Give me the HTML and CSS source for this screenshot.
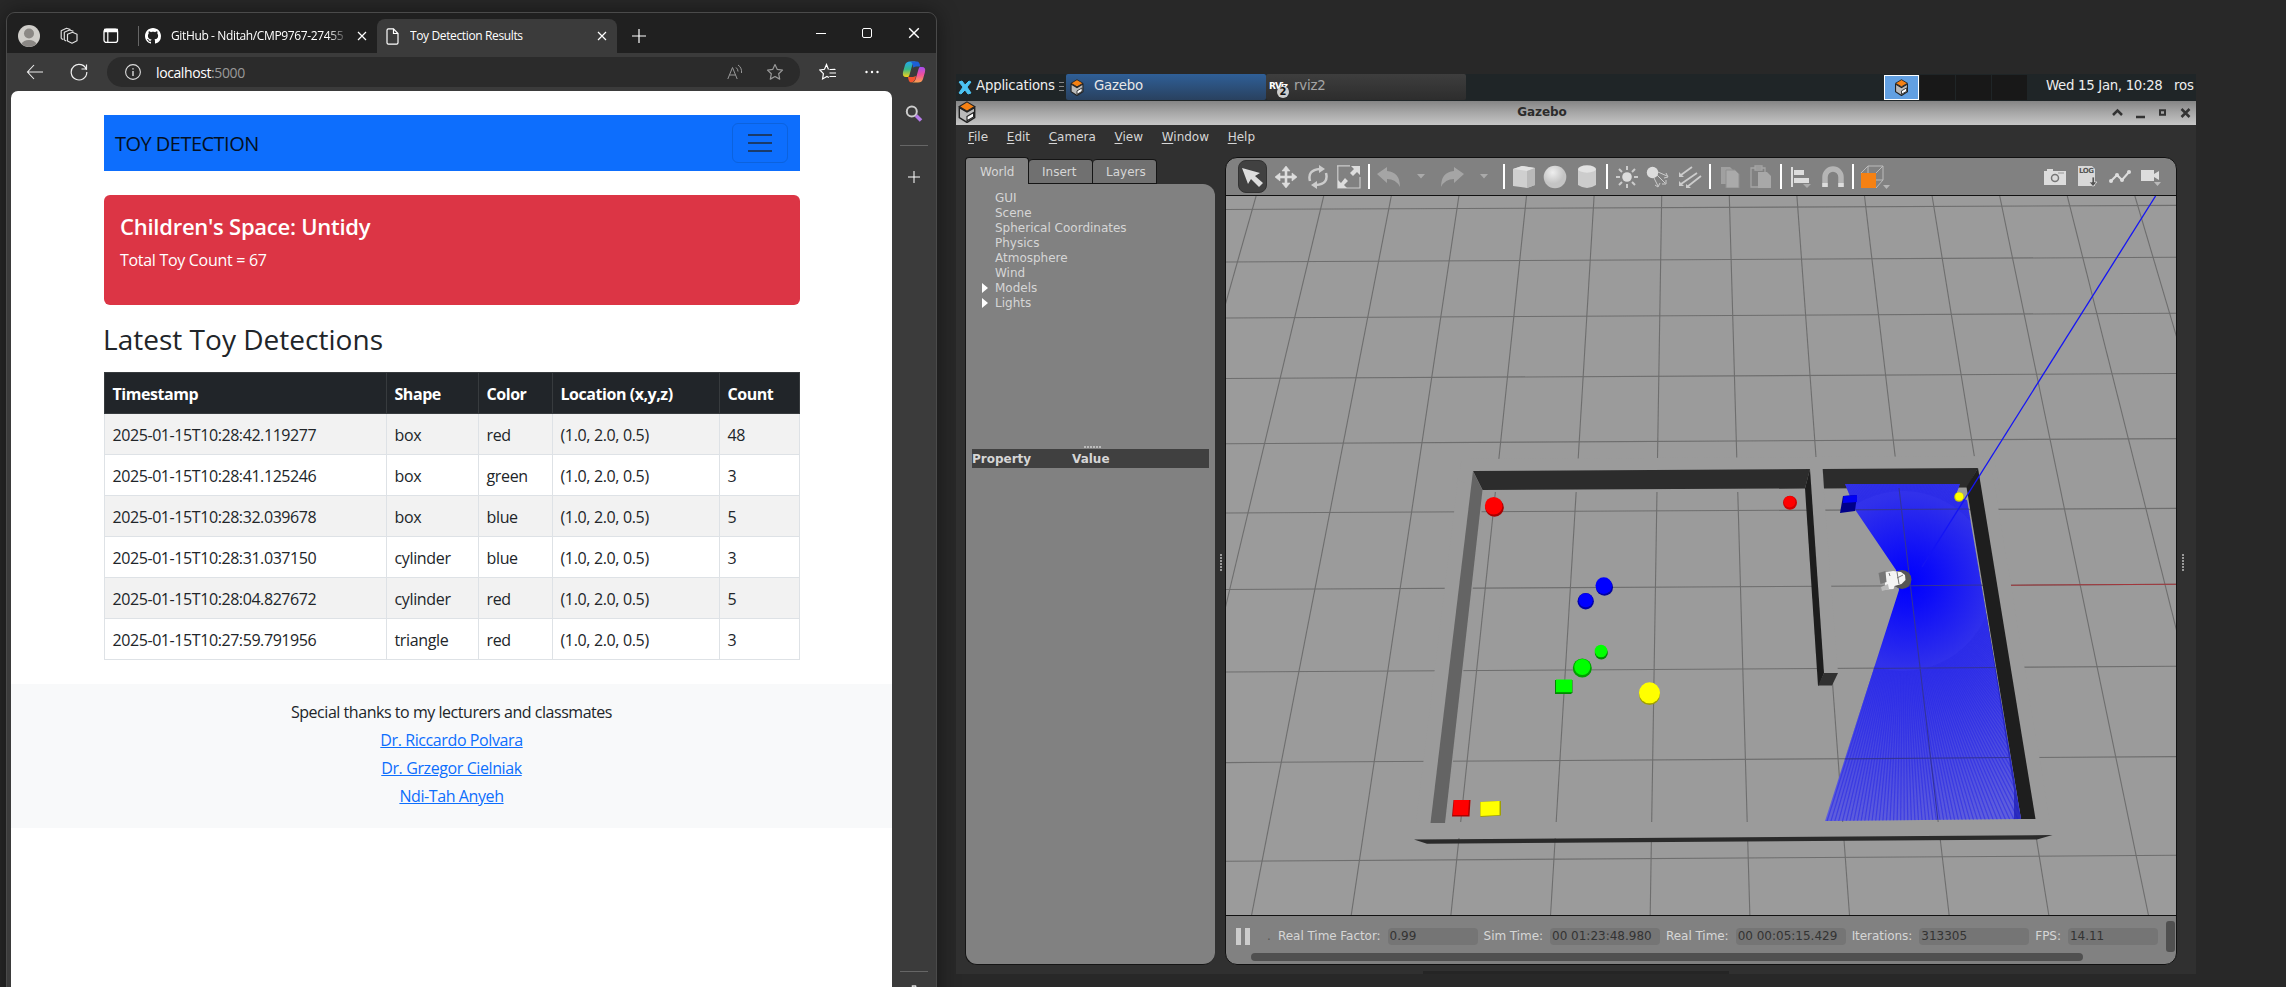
FILE: index.html
```html
<!DOCTYPE html>
<html lang="en">
<head>
<meta charset="utf-8">
<title>Toy Detection Results</title>
<link rel="stylesheet" href="styles.css">
</head>
<body>
<svg class="defs" width="0" height="0">
  <symbol id="gz" viewBox="0 0 16 20"><path d="M1 6v9l7 4.500 7-4.500V6L8 10z" fill="#bbb" stroke="#222" stroke-width="1.300"/><path d="M8 .8l7 4.200-7 4.200-7-4.200z" fill="#f58113" stroke="#222"/><path d="M8 14l6-3.500v4L8 18z" fill="#fff" stroke="#222"/></symbol>
  <symbol id="x" viewBox="0 0 10 10"><path d="M1 1l8 8M9 1l-8 8" stroke="currentColor" stroke-width="1.200"/></symbol>
  <symbol id="plus" viewBox="0 0 14 14"><path d="M7 0v14M0 7h14" stroke="currentColor" stroke-width="1.200"/></symbol>
  <symbol id="down" viewBox="0 0 8 5"><path d="M0 0h8L4 4.500z" fill="currentColor"/></symbol>
  <symbol id="star" viewBox="0 0 18 18"><path d="M9 1.500l2.300 4.900 5.200.7-3.800 3.700 1 5.300L9 13.500l-4.700 2.600 1-5.300L1.500 7.100l5.200-.7z" fill="none" stroke="currentColor" stroke-width="1.200" stroke-linejoin="round"/></symbol>
</svg>

<main class="desktop">
<section class="browser">
  <header class="tabstrip">
    <svg class="avatar" viewBox="0 0 22 22"><circle cx="11" cy="11" r="11" fill="#cfcdc9"/><circle cx="11" cy="8.500" r="5" fill="#8b8885"/><path d="M3.500 19a8 6 0 0 1 15 0A11 11 0 0 1 3.500 19z" fill="#8b8885"/></svg>
    <svg class="spaces" viewBox="0 0 18 18"><g fill="none" stroke="#ddd" stroke-width="1.200" stroke-linejoin="round"><path d="M7.500 7.200l5-2 4.500 2v6.500l-5 2.500-4.500-2.200z"/><path d="M4.300 13V5.300L9.500 3l4 1.300M1.200 11.500V3.800L6.500 1.300l4 1.200M1.200 11.500l2 1M4.300 13l2 1"/></g></svg>
    <svg class="tabact" viewBox="0 0 16 16"><path d="M1 2.500h14" stroke="#fff" stroke-width="3.500"/><rect x="1" y="1.200" width="13.600" height="13.200" rx="2.500" fill="none" stroke="#fff" stroke-width="1.300"/><path d="M4.800 3v11" stroke="#fff" stroke-width="1.200"/></svg>
    <div class="tab">
      <svg width="16" height="16" viewBox="0 0 16 16"><path fill="#fff" d="M8 0C3.580 0 0 3.580 0 8c0 3.540 2.290 6.530 5.470 7.590.4.070.55-.17.55-.38 0-.19-.01-.82-.01-1.490-2.010.37-2.530-.49-2.690-.94-.09-.23-.48-.94-.82-1.130-.28-.15-.68-.52-.01-.53.63-.01 1.080.58 1.230.82.72 1.210 1.870.87 2.330.66.07-.52.28-.87.51-1.070-1.780-.2-3.640-.89-3.640-3.950 0-.87.31-1.590.82-2.150-.08-.2-.36-1.020.08-2.120 0 0 .67-.21 2.200.82.64-.18 1.320-.27 2-.27s1.360.09 2 .27c1.530-1.040 2.200-.82 2.200-.82.44 1.100.16 1.920.08 2.120.51.56.82 1.270.82 2.150 0 3.070-1.870 3.750-3.650 3.950.29.25.54.73.54 1.480 0 1.070-.01 1.930-.01 2.200 0 .21.15.46.55.38A8 8 0 0 0 16 8c0-4.420-3.580-8-8-8z"/></svg>
      <span class="tabtext fade">GitHub - Nditah/CMP9767-27455</span>
      <svg class="tabx" width="10" height="10"><use href="#x"/></svg>
    </div>
    <div class="tab active">
      <svg width="13" height="17" viewBox="0 0 13 17"><path d="M1 2.200Q1 .8 2.400.8H7.500L12 5.500v9.300q0 1.400-1.400 1.400H2.400Q1 16.200 1 14.800zM7.500.8v4.700H12" fill="none" stroke="#fff" stroke-width="1.200"/></svg>
      <span class="tabtext">Toy Detection Results</span>
      <svg class="tabx" width="10" height="10"><use href="#x"/></svg>
    </div>
    <svg class="newtab" width="14" height="14"><use href="#plus"/></svg>
    <div class="winbtns">
      <svg width="10" height="10" viewBox="0 0 10 10"><path d="M0 5.500h10" stroke="#fff"/></svg>
      <svg width="10" height="10" viewBox="0 0 10 10"><rect x=".5" y=".5" width="9" height="9" rx="1.500" fill="none" stroke="#fff"/></svg>
      <svg width="12" height="12"><use href="#x"/></svg>
    </div>
  </header>

  <nav class="urlrow">
    <svg width="18" height="16" viewBox="0 0 18 16"><path d="M17 8H1.500M8 1L1.500 8 8 15" fill="none" stroke="#eee" stroke-width="1.100"/></svg>
    <svg class="reload" width="18" height="18" viewBox="0 0 18 18"><path d="M16.500 7A7.800 7.800 0 1 0 16.800 9M16.500 1.500V6h-5" fill="none" stroke="#eee" stroke-width="1.200"/></svg>
    <div class="address">
      <svg width="16" height="16" viewBox="0 0 16 16"><circle cx="8" cy="8" r="7.400" fill="none" stroke="#ddd" stroke-width="1.100"/><path d="M8 7v5M8 4.300v1.300" stroke="#ddd" stroke-width="1.400"/></svg>
      <span class="url">localhost<i>:5000</i></span>
      <svg class="read" width="16" height="16" viewBox="0 0 16 16"><g fill="none" stroke="#999"><path d="M.8 15L5.500 3.500 10.200 15M2.500 11h6"/><path d="M9 3.500q2 1.500 2 4M11 1q4 2.500 3.500 8"/></g></svg>
      <svg class="fav" width="18" height="18"><use href="#star"/></svg>
    </div>
    <svg class="favs" width="18" height="18" viewBox="0 0 18 18"><path d="M12 6.500l4-.1M9.500 6.500L7.500 1.500 5.500 6.300.9 7l3.500 3.700-.8 5.200 4.300-2.500 2 1.200M10.500 6.500h6M10.500 10H17M10.500 13.500H17" fill="none" stroke="#fff" stroke-width="1.200"/></svg>
    <svg class="dots" width="14" height="4" viewBox="0 0 14 4"><g fill="#fff"><circle cx="1.500" cy="2" r="1.200"/><circle cx="7" cy="2" r="1.200"/><circle cx="12.500" cy="2" r="1.200"/></g></svg>
    <svg class="copilot" width="24" height="22" viewBox="0 0 24 22"><defs><linearGradient id="ca" x2="0" y2="1"><stop stop-color="#22a7f0"/><stop offset=".5" stop-color="#37b788"/><stop offset="1" stop-color="#f7d117"/></linearGradient><linearGradient id="cb" x2="0" y2="1"><stop stop-color="#a64df0"/><stop offset=".5" stop-color="#f0509a"/><stop offset="1" stop-color="#fba24c"/></linearGradient></defs><path d="M6 16H4Q0 16 1 11L3 4Q4 .5 8 .5h6Q11 1 10 5L8 12q-1 4-2 4z" fill="url(#ca)"/><path d="M8 .5h7q2.500 0 3.300 5H14l-3 1q0-5-3-6z" fill="#1d5fd8"/><path d="M18 6h2q4 0 3 5l-2 7q-1 3.500-5 3.500h-6q3-.5 4-4.500l2-7q1-4 2-4z" fill="url(#cb)"/><path d="M6 16h5l3-1q-1 6-5 6.500Q6.500 21 6 16z" fill="#f4542e"/></svg>
  </nav>

  <div class="content">
    <article class="page">
      <div class="container">
        <div class="navbar"><span class="brand">TOY DETECTION</span><span class="toggler"><b></b><b></b><b></b></span></div>
        <div class="alert"><h4>Children's Space: Untidy</h4><p>Total Toy Count = 67</p></div>
        <h3>Latest Toy Detections</h3>
        <table>
          <colgroup><col class="c1"><col class="c2"><col class="c3"><col class="c4"><col></colgroup>
          <thead><tr><th>Timestamp</th><th>Shape</th><th>Color</th><th>Location (x,y,z)</th><th>Count</th></tr></thead>
          <tbody>
            <tr><td class="ts">2025-01-15T10:28:42.119277</td><td>box</td><td>red</td><td>(1.0, 2.0, 0.5)</td><td>48</td></tr>
            <tr><td class="ts">2025-01-15T10:28:41.125246</td><td>box</td><td>green</td><td>(1.0, 2.0, 0.5)</td><td>3</td></tr>
            <tr><td class="ts">2025-01-15T10:28:32.039678</td><td>box</td><td>blue</td><td>(1.0, 2.0, 0.5)</td><td>5</td></tr>
            <tr><td class="ts">2025-01-15T10:28:31.037150</td><td>cylinder</td><td>blue</td><td>(1.0, 2.0, 0.5)</td><td>3</td></tr>
            <tr><td class="ts">2025-01-15T10:28:04.827672</td><td>cylinder</td><td>red</td><td>(1.0, 2.0, 0.5)</td><td>5</td></tr>
            <tr><td class="ts">2025-01-15T10:27:59.791956</td><td>triangle</td><td>red</td><td>(1.0, 2.0, 0.5)</td><td>3</td></tr>
          </tbody>
        </table>
      </div>
      <footer><p>Special thanks to my lecturers and classmates</p><a>Dr. Riccardo Polvara</a><a>Dr. Grzegor Cielniak</a><a>Ndi-Tah Anyeh</a></footer>
    </article>
    <aside class="side">
      <svg width="18" height="18" viewBox="0 0 18 18"><circle cx="6.800" cy="6.500" r="5" fill="none" stroke="#ccc" stroke-width="2"/><path d="M11 10.500l5 5" stroke="#b57be8" stroke-width="3.500"/></svg>
      <hr>
      <svg class="sideplus" width="12" height="12"><use href="#plus"/></svg>
      <hr class="low">
      <svg class="gear" width="16" height="16" viewBox="0 0 16 16"><path d="M6.500 1h3l.5 2 2 1 2-.5 1.200 2.500-1.500 2 1.500 2-1.200 2.500-2-.5-2 1-.5 2h-3z" fill="none" stroke="#ddd" stroke-width="1.500"/></svg>
    </aside>
  </div>
</section>

<section class="remote">
  <div class="panel">
    <svg class="xfce" width="14" height="15" viewBox="0 0 14 15"><path d="M1 2l3-1 3 4 4-4 2 1-4 5 4 6-3 1-3-4-4 4-2-1 4-6z" fill="#4cc3f2" stroke="#4cc3f2"/></svg>
    <span class="apps">Applications</span>
    <svg class="bars" width="5" height="10" viewBox="0 0 5 10"><path d="M0 .5h5M0 4.500h5M0 8.500h5" stroke="#888"/></svg>
    <div class="task on"><svg width="14" height="17"><use href="#gz"/></svg><span>Gazebo</span></div>
    <div class="task"><div class="rviz"><em>RViz</em><b>2</b></div><span>rviz2</span></div>
    <div class="pager"><span class="cur"><svg width="15" height="17"><use href="#gz"/></svg></span><span></span><span></span><span></span></div>
    <span class="clock">Wed 15 Jan, 10:28</span><span class="user">ros</span>
  </div>
  <div class="titlebar">
    <svg width="18" height="22"><use href="#gz"/></svg><span class="title">Gazebo</span>
    <svg class="wm" width="79" height="12" viewBox="0 0 79 12"><g fill="none" stroke="#333" stroke-width="2.500"><path d="M1 8l4.500-4.500L10 8M24 10h9"/><path d="M48 3.300h5v4.500h-5z" stroke-width="2"/><path d="M69.500 2l8 8m0-8l-8 8"/></g></svg>
  </div>
  <div class="gmenu"><span><u>F</u>ile</span><span><u>E</u>dit</span><span><u>C</u>amera</span><span><u>V</u>iew</span><span><u>W</u>indow</span><span><u>H</u>elp</span></div>
  <div class="gbody">
    <div class="left">
      <div class="gtabs"><span class="sel">World</span><span>Insert</span><span>Layers</span></div>
      <div class="tree">
        <ul><li>GUI</li><li>Scene</li><li>Spherical Coordinates</li><li>Physics</li><li>Atmosphere</li><li>Wind</li><li class="open">Models</li><li class="open">Lights</li></ul>
        <i class="hgrip"></i>
        <div class="prop"><span>Property</span><span>Value</span></div>
      </div>
    </div>
    <i class="vgrip"></i>
    <div class="right">
      <div class="tools">
        <span class="selbtn"><svg width="22" height="22" viewBox="0 0 22 22"><path d="M0 2l18 5-5 3 8 7-4 4-8-8-3 5z" fill="#ddd"/></svg></span>
        <span class="t"><svg width="22" height="22" viewBox="0 0 22 22"><path d="M11 0l4 5h-3v5h5V7l5 4-5 4v-3h-5v5h3l-4 5-4-5h3v-5H5v3l-5-4 5-4v3h5V5H7z" fill="#ddd" stroke="#ddd" stroke-width=".6"/></svg></span>
        <span class="t"><svg width="20" height="24" viewBox="0 0 20 24"><path d="M2 16Q-1 5 12 4M18 8q3 11-10 12" fill="none" stroke="#ccc" stroke-width="2.500"/><path d="M11 0l6 4-6 4zM9 16l-6 4 6 4z" fill="#ccc"/></svg></span>
        <span class="t"><svg width="24" height="24" viewBox="0 0 24 24"><path d="M13 .8H.8V23H23V12M0 .8h6" fill="none" stroke="#ccc" stroke-width="1.200"/><path d="M14 1h9v9l-3-3-4 4-3-3 4-4zM1 15l3 3 4-5 3 3-4 4 3 3H1z" fill="#ddd"/></svg></span>
        <i class="sep"></i>
        <span class="t"><svg width="24" height="22" viewBox="0 0 24 22"><path d="M0 8l10-7v4q13 1 13 16-4-8-13-8v4z" fill="#a5a5a5"/></svg></span>
        <span class="t dd"><svg width="8" height="5"><use href="#down"/></svg></span>
        <span class="t"><svg width="24" height="22" viewBox="0 0 24 22"><path d="M24 8L14 1v4Q1 6 1 21q4-8 13-8v4z" fill="#a5a5a5"/></svg></span>
        <span class="t dd"><svg width="8" height="5"><use href="#down"/></svg></span>
        <i class="sep"></i>
        <span class="t"><svg width="24" height="24" viewBox="0 0 24 24"><path d="M1 4l9-3 13 2v17l-8 3-14-2z" fill="#cfcfcf"/><path d="M1 4l9-3 13 2-8 3z" fill="#e2e2e2"/><path d="M15 6l8-3v17l-8 3z" fill="#b9b9b9"/></svg></span>
        <span class="t"><svg width="24" height="24" viewBox="0 0 24 24"><defs><radialGradient id="sp" cx=".4" cy=".3"><stop stop-color="#eee"/><stop offset="1" stop-color="#c4c4c4"/></radialGradient></defs><circle cx="12" cy="12" r="11.300" fill="url(#sp)"/></svg></span>
        <span class="t"><svg width="20" height="24" viewBox="0 0 20 24"><path d="M1 4v16q9 6 18 0V4z" fill="#ccc"/><ellipse cx="10" cy="4" rx="9" ry="3.700" fill="#e2e2e2"/></svg></span>
        <i class="sep"></i>
        <span class="t"><svg width="22" height="22" viewBox="0 0 22 22"><circle cx="11" cy="11" r="4.800" fill="#ddd"/><path d="M11 0v4M11 18v4M0 11h4M18 11h4M3 3l3 3M16 16l3 3M3 19l3-3M16 6l3-3" stroke="#ccc" stroke-width="2"/></svg></span>
        <span class="t"><svg width="24" height="22" viewBox="0 0 24 22"><circle cx="6.500" cy="6.500" r="5.700" fill="#ddd"/><path d="M12 6l9 4M11 9l8 8M8 12l4 8M20 7l2 4-4 1M20 14v4h-4M14 17l-2 4-3-2" stroke="#ccc" fill="none"/></svg></span>
        <span class="t"><svg width="24" height="22" viewBox="0 0 24 22"><path d="M14 1L3 9M19 7L3 18M23 10L9 21" stroke="#ccc" stroke-width="1.800"/><path d="M1 6v5h5zM1 15v5h5zM8 18v4h5z" fill="#ccc"/></svg></span>
        <i class="sep"></i>
        <span class="t"><svg width="20" height="22" viewBox="0 0 20 22"><path d="M1 1h9l3 3v14H1z" fill="#a0a0a0"/><path d="M6 4h9l4 4v14H6z" fill="#aaa" stroke="#909090"/></svg></span>
        <span class="t"><svg width="22" height="24" viewBox="0 0 22 24"><path d="M1 3h14v19H1zM5 1h7v4H5z" fill="none" stroke="#a5a5a5" stroke-width="1.300"/><path d="M8 7h9l4 4v12H8z" fill="#a8a8a8"/></svg></span>
        <i class="sep"></i>
        <span class="t"><svg width="20" height="22" viewBox="0 0 20 22"><path d="M1 1v20" stroke="#ddd" stroke-width="2"/><path d="M3 4h10v5H3zM3 12h15v5H3z" fill="#ddd"/><path d="M12 18h8l-4 4z" fill="#aaa"/></svg></span>
        <span class="t"><svg width="24" height="22" viewBox="0 0 24 22"><path d="M4 21V11a8 8 0 0 1 16 0v10" fill="none" stroke="#b5b5b5" stroke-width="5.500"/><path d="M1.300 17h5.400v4H1.300zM17.300 17h5.400v4h-5.400z" fill="#ddd"/></svg></span>
        <i class="sep"></i>
        <span class="t"><svg class="cube" width="30" height="24" viewBox="0 0 30 24"><path d="M1 8L8 1h15v14l-7 8M8 1v14l-7 8M8 15h15M16 8l7-7" fill="none" stroke="#bbb"/><path d="M1 8h15v15H1z" fill="#f58113"/><path d="M23 20h7l-3.500 4z" fill="#b5b5b5"/></svg></span>
        <div class="rtools">
          <svg width="24" height="18" viewBox="0 0 24 18"><path d="M1 3h3V1h6v2h13v14H1z" fill="#ddd"/><circle cx="12" cy="10" r="3.500" fill="none" stroke="#777" stroke-width="1.500"/><path d="M15 5h6" stroke="#999"/></svg>
          <div class="log"><svg width="22" height="23" viewBox="0 0 22 23"><path d="M1 1h14l3 3v17H1z" fill="#d8d8d8"/><path d="M15 12h2.500v5H20l-4 4.500-4-4.500h3z" fill="#555" stroke="#ddd" stroke-width=".8"/></svg><b>LOG</b></div>
          <svg width="22" height="14" viewBox="0 0 22 14"><path d="M2 11l6-6 5 5 7-8" fill="none" stroke="#ddd" stroke-width="2"/><g fill="#ddd"><circle cx="2" cy="11" r="2"/><circle cx="8" cy="5" r="2"/><circle cx="13" cy="10" r="2"/><circle cx="20" cy="2" r="2"/></g></svg>
          <svg width="20" height="18" viewBox="0 0 20 18"><path d="M0 2h13v4l5-3v9l-5-3v4H0z" fill="#ddd"/><path d="M13 14h7l-3.500 4z" fill="#bbb"/></svg>
        </div>
      </div>
      <svg class="scene" width="950" height="719" viewBox="1226 196 950 719">
        <defs>
          <clipPath id="scan"><path d="M1845 484L1960 484 1955 497 1967 500 2021 819 1825 821 1899 590 1896 570 1856 511z"/></clipPath>
          <radialGradient id="glow" gradientUnits="userSpaceOnUse" cx="1908" cy="582" r="245"><stop stop-color="#00f"/><stop offset=".1" stop-color="#0c0cf9"/><stop offset=".35" stop-color="#3030eb"/><stop offset=".65" stop-color="#4444e3"/><stop offset="1" stop-color="#5e5edc"/></radialGradient>
        </defs>
        <rect x="1226" y="196" width="950" height="719" fill="#9b9b9b"/>
        <g id="grid" stroke="#6e6e6e" stroke-width="1.100"></g>
        <g fill="#9b9b9b">
          <path d="M1462 459L1994 456 2000 492 1455 492z"/>
          <path d="M1458 480L1484 490 1446 822 1416 822z"/>
          <path d="M1966 480L1992 470 2050 822 2021 822z"/>
          <path d="M1414 822H2050V838H1414z"/>
          <path d="M1806 488L1823 480 1838 673 1824 685z"/>
        </g>
        <path d="M2011 585.200L2176 584.200" stroke="#a3363b" stroke-width="1.100"/>
        <path d="M1473 471L1810 469 1805 488.500 1482.500 490z" fill="#2c2c2c"/>
        <path d="M1822.700 469L1978 468 1967 487.500 1824 488.500z" fill="#2c2c2c"/>
        <path d="M1473 471L1482.500 490 1445 823H1430.500z" fill="#646464"/>
        <path d="M1978 468L1979.500 477 2035.500 819H2021L1966.500 487z" fill="#1e1e1e"/>
        <path d="M1810 469L1824 673 1819 685.500H1818L1805 488.500z" fill="#1d1d1d"/>
        <path d="M1824 673H1838L1832 685.500H1818z" fill="#303030"/>
        <path d="M1414 839.500L2052.500 835 2037 839.500 1427 843.800z" fill="#2a2a2a"/>
        <g clip-path="url(#scan)">
          <rect x="1820" y="480" width="210" height="345" fill="url(#glow)"/>
          <g id="rays" stroke="#2a2ae6" stroke-width="1.200" opacity=".6"></g>
          <path d="M1968 500L2014 790 2014 822H2024V800z" fill="#2020b8" opacity=".8"/>
          <path d="M1899 488L1938 821M1820 510L1970 509M1890 586L1985 585M1860 668.500L2000 667.500M1830 759L2010 757.500" stroke="#333399" stroke-width="1.100"/>
        </g>
        <path d="M2155.600 196L1922 567" stroke="#1414f5" stroke-width="1.300"/>
        <circle cx="1902" cy="579.500" r="9.500" fill="#555"/><path d="M1884 572.500l9-1.500 8 1 4 3 .5 5-4 4-7 2-1 3-8 .5z" fill="#f4f4f4"/><path d="M1878.500 573l7-2 1 11-6 2z" fill="#777"/><path d="M1881 587l7-3 1 5-7 2z" fill="#bbb"/><path d="M1897 572l2 12M1903 575l-6 3M1889 573l1 3" stroke="#777"/>
        <g>
          <circle cx="1494.500" cy="507.500" r="9.300" fill="#a80000"/><circle cx="1493.700" cy="505.700" r="8.800" fill="red"/>
          <circle cx="1790" cy="502.700" r="7" fill="#d00000"/><circle cx="1789.600" cy="501.700" r="5.800" fill="red"/>
          <circle cx="1604.500" cy="587.200" r="8.500" fill="#0000a0"/><circle cx="1603.800" cy="585.600" r="8.300" fill="#00f"/>
          <circle cx="1585.700" cy="601.300" r="8.200" fill="#0000a8"/><circle cx="1585.700" cy="600.300" r="7" fill="#00f"/>
          <circle cx="1601.300" cy="653" r="6.500" fill="#008a00"/><circle cx="1601" cy="651" r="6.300" fill="#0f0"/>
          <circle cx="1582.300" cy="668" r="9.500" fill="#00a000"/><circle cx="1582.300" cy="667" r="8" fill="#0f0"/>
          <path d="M1555 680h17.500v13h-1v1H1555z" fill="#008a00"/><path d="M1556 679.500h16v12.700h-16z" fill="#0f0"/>
          <circle cx="1649.500" cy="694.500" r="10.500" fill="#a0a000"/><circle cx="1649.500" cy="692.800" r="10.500" fill="#ff0"/>
          <path d="M1453.500 800H1470.500L1469.500 816.500H1452z" fill="#b00000"/><path d="M1454 800H1469L1468 815H1453z" fill="red"/>
          <path d="M1480 802L1501 801V815.500L1480.500 817z" fill="#a0a000"/><path d="M1480.500 802L1499.500 801V815L1480.500 816z" fill="#ff0"/>
          <path d="M1843 496L1857 495 1855 511 1840 513z" fill="#00008a"/><path d="M1843.500 496L1857 495V502L1843 503z" fill="#0000f5"/>
          <circle cx="1959" cy="497" r="4.800" fill="#c8c800"/><circle cx="1959.300" cy="496.500" r="4" fill="#ff0"/>
        </g>
      </svg>
      <div class="status">
        <span class="pause"></span><span class="dot">.</span>
        <label>Real Time Factor:</label><output class="w90">0.99</output>
        <label>Sim Time:</label><output>00 01:23:48.980</output>
        <label>Real Time:</label><output>00 00:05:15.429</output>
        <label>Iterations:</label><output>313305</output>
        <label>FPS:</label><output class="w90">14.11</output>
        <i class="vscroll"></i>
      </div>
      <div class="hscroll"></div>
    </div>
    <i class="vgrip rg"></i>
  </div>
  <div class="handle"></div>
</section>
</main>
<script src="scene.js"></script>
</body>
</html>
```
FILE: scene.js
```js
const NS = 'http://www.w3.org/2000/svg';
function line(parent, x1, y1, x2, y2) {
  const l = document.createElementNS(NS, 'path');
  l.setAttribute('d', `M${x1} ${y1}L${x2} ${y2}`);
  parent.appendChild(l);
}
const grid = document.getElementById('grid');
// rows of the ground plane: y at the left edge, y at the right edge
[[209.5, 205.4], [262, 257.2], [318, 313.2], [378.5, 373.5], [443.7, 438.6],
 [513, 508.4], [589.5, 584.3], [672, 666.3], [762.6, 756.6], [861.3, 855.3]]
  .forEach(([a, b]) => line(grid, 1226, a, 2176, b));
// columns fan out from the top edge to the bottom edge
for (let i = -7; i <= 7; i++) line(grid, 1661.7 + i * 67.6, 196, 1650.2 + i * 99.65, 915);

const rays = document.getElementById('rays');
for (let a = -150; a <= 150; a += 0.85) {
  const r = a * Math.PI / 180;
  line(rays, 1903 + 90 * Math.cos(r), 581 + 90 * Math.sin(r), 1903 + 330 * Math.cos(r), 581 + 330 * Math.sin(r));
}
```
FILE: styles.css
```css
* { box-sizing: border-box; }
body { margin: 0; background: #282828; overflow: hidden; }
.defs { position: absolute; }
svg { display: block; flex: none; }
i { font-style: normal; }
.desktop { display: flex; height: 987px; overflow: hidden; }

/* browser window */
.browser { width: 931px; height: 1000px; margin: 12px 0 0 6px; flex: none; border: 1px solid #4a4a4a; border-radius: 9px; background: #3b3b3b; overflow: hidden; color: #fff; font-family: "Open Sans", "Noto Sans", sans-serif; box-shadow: 0 0 22px #0007; }
.tabstrip { display: flex; align-items: center; height: 40px; padding: 6px 0 0 11px; background: #202020; }
.avatar { width: 22px; height: 22px; }
.spaces { width: 18px; height: 18px; margin-left: 20px; }
.tabact { width: 16px; height: 16px; margin-left: 25px; }
.tab { display: flex; align-items: center; height: 20px; width: 239px; margin-left: 19px; padding-left: 6px; border-left: 1px solid #666; }
.tab.active { height: 34px; width: 240px; margin: 0; padding-left: 9px; border: 0; border-radius: 8px 8px 0 0; background: #3b3b3b; }
.tabtext { font-size: 12px; line-height: 16px; letter-spacing: -.37px; margin: -1px 0 0 10px; width: 178px; white-space: nowrap; overflow: hidden; }
.active .tabtext { margin-left: 11px; width: 179px; }
.fade { -webkit-mask-image: linear-gradient(90deg, #000 88%, transparent); mask-image: linear-gradient(90deg, #000 88%, transparent); }
.tabx { margin-left: 8px; }
.newtab { margin-left: 15px; }
.winbtns { display: flex; gap: 36px; margin: -6px 0 0 170px; align-items: center; }
.urlrow { display: flex; align-items: center; height: 38px; padding-left: 19px; }
.reload { margin-left: 26px; }
.address { display: flex; align-items: center; width: 693px; height: 30px; margin-left: 19px; padding-left: 18px; border-radius: 15px; background: #2b2b2b; color: #999; }
.url { flex: 1; margin-left: 15px; font-size: 14px; letter-spacing: -.4px; color: #fff; }
.url i { color: #999; }
.fav { margin: 0 16px 0 23px; }
.favs { margin-left: 19px; }
.dots { margin-left: 28px; }
.copilot { margin-left: 23px; }
.content { display: flex; height: 920px; }
.page { width: 881px; margin-left: 4px; padding-top: 24px; background: #fff; border-radius: 7px 7px 0 0; color: #212529; font-size: 16px; letter-spacing: -.35px; }
.container { width: 696px; margin-left: 93px; }
.navbar { display: flex; align-items: center; justify-content: space-between; height: 56px; padding: 0 12px; background: #0d6efd; }
.brand { margin-left: -1px; font-size: 20px; letter-spacing: -.52px; color: #041022; }
.toggler { display: flex; flex-direction: column; align-items: center; justify-content: center; gap: 6px; width: 56px; height: 40px; border: 1px solid #0c62dd; border-radius: 6px; }
.toggler b { width: 24px; height: 2px; background: #1a3b6b; }
.alert { height: 110px; margin-top: 24px; padding: 17px 16px; border-radius: 6px; background: #dc3545; color: #fff; }
.alert h4 { margin: 0 0 7px; font-size: 22px; line-height: 29px; font-weight: 600; letter-spacing: -.25px; }
.alert p { margin: 0; line-height: 24px; letter-spacing: -.3px; }
h3 { margin: 17px 0 16px -1px; font-size: 28px; line-height: 34px; font-weight: 500; letter-spacing: .02px; }
table { width: 696px; table-layout: fixed; border-collapse: collapse; }
.c1 { width: 282px; } .c2 { width: 92px; } .c3 { width: 74px; } .c4 { width: 167px; }
th, td { height: 41px; padding: 1px 8px 0 7.500px; text-align: left; border: 1px solid #dee2e6; white-space: nowrap; }
.ts { letter-spacing: -.42px; }
th { background: #212529; border-color: #373b3e; color: #fff; font-weight: 700; letter-spacing: -.45px; }
tbody tr:nth-child(odd) { background: #f2f2f2; }
footer { display: flex; flex-direction: column; align-items: center; height: 144px; margin-top: 24px; padding-top: 14px; background: #f8f9fa; line-height: 28px; }
footer p { margin: 0; letter-spacing: -.46px; }
footer a { color: #0d6efd; text-decoration: underline; letter-spacing: -.4px; }
.side { display: flex; flex-direction: column; align-items: center; width: 44px; padding: 14px 0 0; }
.side hr { width: 28px; height: 1px; margin: 22px 0 25px; border: 0; background: #666; }
.side hr.low { margin: 788px 0 13px; }

/* remote desktop */
.remote { display: flex; flex-direction: column; width: 1240px; height: 900px; margin: 74px 0 0 19px; flex: none; position: relative; background: #303030; font: 12px "DejaVu Sans", sans-serif; color: #d6d6d6; }
.panel { display: flex; align-items: center; height: 27px; flex: none; background: #1f2527; color: #eee; font-size: 13.3px; line-height: 16px; white-space: nowrap; padding-bottom: 1px; }
.xfce { margin-left: 2px; }
.apps { margin: -2px 0 0 4px; width: 83px; letter-spacing: -.2px; }
.bars { margin-right: 2px; }
.task { display: flex; align-items: center; width: 200px; height: 26px; padding-left: 4px; background: linear-gradient(#3e3e3e, #2d2d2d); border-radius: 2px; color: #a5a5a5; }
.task.on { background: linear-gradient(#2f5f97, #29415f); color: #e8e8e8; }
.task span { margin: -2px 0 0 10px; letter-spacing: -.2px; }
.rviz { display: flex; width: 20px; height: 18px; margin: 5px 0 0 -1px; }
.rviz em { font: bold 9px "DejaVu Sans"; letter-spacing: -1px; color: #fff; width: 8px; }
.rviz b { width: 12px; height: 12px; margin-top: 5px; flex: none; border-radius: 6px; background: #ccc; color: #111; font-size: 10px; line-height: 12px; text-align: center; }
.task .rviz + span { margin-left: 5px; }
.pager { display: flex; gap: 1px; margin-left: 418px; }
.pager span { width: 35px; height: 25px; background: #181818; }
.pager .cur { display: flex; align-items: center; justify-content: center; border: 1px solid #fff; background: #62a0e2; }
.clock { margin: -2px 0 0 19px; width: 128px; letter-spacing: -.3px; }
.user { margin-top: -2px; letter-spacing: -.2px; }
.titlebar { display: flex; align-items: center; height: 24px; flex: none; background: linear-gradient(#858585, #a8a8a8 50%, #c6c6c6); color: #2c2c2c; }
.titlebar > svg:first-child { margin-left: 2px; margin-top: -3px; }
.title { flex: 1; margin: -2px 0 0 -4px; font-weight: bold; text-align: center; letter-spacing: -.1px; }
.wm { margin: -1px 5px 0 0; }
.gmenu { display: flex; align-items: center; gap: 18.700px; height: 24px; flex: none; padding-left: 12px; }
.gmenu u { text-underline-offset: 2px; }
.gbody { display: flex; height: 808px; margin-top: 8px; padding-left: 9px; flex: none; }
.left { width: 250px; display: flex; flex-direction: column; }
.gtabs { display: flex; align-items: flex-end; height: 27px; }
.gtabs span { width: 64px; height: 25px; padding: 5px 0 0 13px; background: #707070; border: solid #151515; border-width: 1px 1px 1px 0; border-radius: 4px 4px 0 0; }
.gtabs .sel { height: 27px; padding: 7px 0 0 14px; background: #818181; border-width: 1px 1px 0 1px; border-bottom-color: #818181; }
.tree { flex: 1; border: 1px solid #151515; border-width: 0 0 1px 1px; border-radius: 0 12px 12px 12px; background: #818181; }
.tree ul { list-style: none; margin: 0; padding: 7px 0 0 29px; height: 262px; line-height: 14.950px; }
.tree .open { display: flex; align-items: center; gap: 7px; margin-left: -13px; }
.tree .open::before { content: ""; border: solid transparent; border-width: 5.500px 0 5.500px 6px; border-left-color: #fff; }
.hgrip { display: block; width: 17px; height: 2px; margin: 0 0 1px 118px; background: repeating-linear-gradient(90deg, #bbb 0 2px, transparent 2px 3px); }
.prop { display: flex; width: 237px; height: 19px; margin-left: 6px; background: #404040; font-weight: bold; line-height: 20px; }
.prop span { width: 100px; }
.vgrip { width: 2px; height: 17px; margin: 397px 3px 0 5px; background: repeating-linear-gradient(#999 0 2px, transparent 2px 3px); }
.vgrip.rg { margin-left: 5px; }
.right { width: 952px; height: 808px; border: 1px solid #111; border-radius: 12px; background: #818181; overflow: hidden; display: flex; flex-direction: column; flex: none; }
.tools { display: flex; align-items: center; height: 38px; flex: none; padding-left: 12px; border-bottom: 1px solid #111; }
.selbtn { display: flex; align-items: center; justify-content: center; width: 29px; height: 33px; margin-right: 3px; border-radius: 8px; background: #414141; border: 1px solid #333; }
.t { display: flex; justify-content: center; width: 31.700px; color: #aaa; flex: none; }
.sep { width: 2px; height: 25px; margin: 0 3px; background: #fff; flex: none; }
.cube { margin-left: 5px; }
.rtools { display: flex; align-items: center; gap: 10px; margin-left: auto; padding-right: 15px; }
.log { position: relative; }
.log b { position: absolute; left: 2px; top: 2px; font-size: 7px; letter-spacing: -.5px; color: #555; }
.scene { width: 950px; height: 719px; }
.status { display: flex; align-items: center; height: 36px; flex: none; padding: 5px 0 0 10px; border-top: 1px solid #111; white-space: nowrap; }
.pause { width: 14px; height: 17px; border: solid #ccc; border-width: 0 5px; }
.dot { width: 28px; padding-left: 17px; color: #555; }
label { margin-right: 7px; letter-spacing: -.05px; }
output { width: 110px; height: 17px; margin-right: 6px; padding-left: 2px; border-radius: 4px; background: #757575; color: #333; line-height: 17px; }
output.w90 { width: 90px; }
.vscroll { width: 9px; height: 31px; margin: 0 1px 0 auto; border-radius: 3px; background: #505050; }
.hscroll { width: 832px; height: 8px; margin: 2px 0 0 25px; flex: none; border-radius: 4px; background: #505050; }
.handle { width: 306px; height: 3px; margin: 6px 0 0 467px; background: #252525; }
```
